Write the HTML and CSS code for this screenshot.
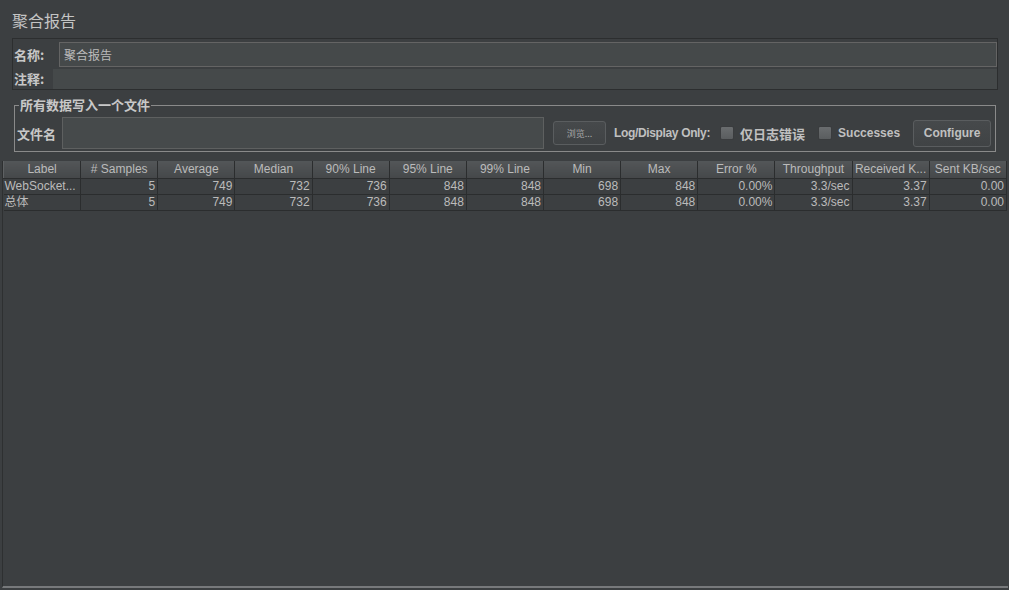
FILE: index.html
```html
<!DOCTYPE html>
<html lang="zh">
<head>
<meta charset="utf-8">
<link rel="stylesheet" href="styles.css">
</head>
<body>
<div class="app">
  <div class="title">聚合报告</div>
  <div class="name-panel">
    <div class="row row-name">
      <span class="lbl">名称:</span>
      <div class="field field-name">聚合报告</div>
    </div>
    <div class="row row-comment">
      <span class="lbl">注释:</span>
      <div class="field field-comment"></div>
    </div>
  </div>
  <fieldset class="file-group">
    <legend>所有数据写入一个文件</legend>
    <div class="file-row">
      <span class="file-lbl">文件名</span>
      <div class="field file-field"></div>
      <div class="btn btn-browse">浏览...</div>
      <span class="log-lbl">Log/Display Only:</span>
      <span class="check"></span>
      <span class="check-lbl cjk">仅日志错误</span>
      <span class="check"></span>
      <span class="check-lbl">Successes</span>
      <div class="btn btn-config">Configure</div>
    </div>
  </fieldset>
  <div class="table-pane">
    <table class="grid">
      <thead>
        <tr>
          <th>Label</th><th># Samples</th><th>Average</th><th>Median</th><th>90% Line</th><th>95% Line</th><th>99% Line</th><th>Min</th><th>Max</th><th>Error %</th><th>Throughput</th><th>Received K...</th><th>Sent KB/sec</th>
        </tr>
      </thead>
      <tbody>
        <tr>
          <td class="first">WebSocket...</td><td>5</td><td>749</td><td>732</td><td>736</td><td>848</td><td>848</td><td>698</td><td>848</td><td>0.00%</td><td>3.3/sec</td><td>3.37</td><td>0.00</td>
        </tr>
        <tr>
          <td class="first">总体</td><td>5</td><td>749</td><td>732</td><td>736</td><td>848</td><td>848</td><td>698</td><td>848</td><td>0.00%</td><td>3.3/sec</td><td>3.37</td><td>0.00</td>
        </tr>
      </tbody>
    </table>
  </div>
</div>
</body>
</html>
```
FILE: styles.css
```css
* { box-sizing: border-box; }
html, body {
  margin: 0;
  padding: 0;
  background: #3c3f41;
  width: 1009px;
  height: 590px;
  overflow: hidden;
}
body {
  font-family: "Liberation Sans", "Noto Sans CJK SC", sans-serif;
  color: #bbbbbb;
  font-size: 12px;
}
.app {
  display: flex;
  flex-direction: column;
  height: 590px;
}
.title {
  font-family: "Noto Sans CJK SC", sans-serif;
  font-size: 16px;
  line-height: 20px;
  padding: 10px 0 0 12px;
  height: 38px;
  color: #c4c4c4;
}
.name-panel {
  margin: 0 11px 0 12px;
  height: 52px;
  border: 1px solid #2c2e2f;
  display: flex;
  flex-direction: column;
}
.row {
  display: flex;
  align-items: center;
}
.row-name {
  height: 29px;
  padding-top: 2px;
}
.row-comment {
  flex: 1;
}
.lbl {
  font-family: "Noto Sans CJK SC", sans-serif;
  font-weight: bold;
  font-size: 13px;
  color: #c8c8c8;
  padding-left: 1px;
}
.row-name .lbl { width: 46px; }
.row-comment .lbl { width: 40px; }
.field {
  background: #45494a;
  flex: 1;
}
.field-name {
  height: 25px;
  border: 1px solid #646464;
  font-family: "Noto Sans CJK SC", sans-serif;
  font-size: 12px;
  line-height: 23px;
  padding-left: 4px;
  color: #bbbbbb;
}
.field-comment {
  height: 20px;
  align-self: flex-end;
}
.file-group {
  margin: 7px 13px 0 14px;
  padding: 0 4px 0 2px;
  border: 1px solid #8a8a8a;
  height: 55px;
  min-width: 0;
}
.file-group legend {
  font-family: "Noto Sans CJK SC", sans-serif;
  font-weight: bold;
  font-size: 13px;
  color: #c8c8c8;
  padding: 0 1px;
  margin-left: 2px;
  line-height: 16px;
}
.file-row {
  display: flex;
  align-items: center;
  height: 38px;
  margin-top: 1px;
}
.file-lbl {
  font-family: "Noto Sans CJK SC", sans-serif;
  font-weight: bold;
  font-size: 13px;
  color: #c8c8c8;
  width: 45px;
  flex: none;
}
.file-field {
  flex: none;
  width: 482px;
  height: 32px;
  border: 1px solid #5e6060;
  background: #464a4b;
}
.btn {
  flex: none;
  border: 1px solid #5a5d5f;
  border-radius: 3px;
  background: linear-gradient(#46494b, #404345);
  color: #bbbbbb;
  display: flex;
  align-items: center;
  justify-content: center;
}
.btn-browse {
  margin-left: 9px;
  width: 53px;
  height: 24px;
  font-family: "Noto Sans CJK SC", sans-serif;
  font-size: 9px;
  color: #a8a8a8;
}
.log-lbl {
  flex: none;
  white-space: nowrap;
  margin-left: 8px;
  font-weight: bold;
  font-size: 12px;
  letter-spacing: -0.35px;
  color: #c0c0c0;
}
.check {
  flex: none;
  width: 14px;
  height: 14px;
  background: linear-gradient(#6a6d6f, #5a5d5f);
  border: 1px solid #3a3c3e;
  border-radius: 2px;
  margin-left: 10px;
}
.check-lbl {
  flex: none;
  white-space: nowrap;
  margin-left: 6px;
  font-weight: bold;
  font-size: 12px;
  color: #c0c0c0;
}
.check-lbl.cjk {
  font-family: "Noto Sans CJK SC", sans-serif;
  font-size: 13px;
  width: 64px;
  margin-right: 4px;
}
.btn-config {
  margin-left: 13px;
  width: 78px;
  height: 27px;
  font-weight: bold;
  font-size: 12px;
  color: #c0c0c0;
}
.table-pane {
  margin: 9px 1px 2px 2px;
  flex: 1;
  border-left: 1px solid #2e3031;
  border-bottom: 2px solid #77797b;
  background: #3c3f41;
}
.grid {
  border-collapse: collapse;
  table-layout: fixed;
  width: 1004px;
  font-size: 12px;
}
.grid th {
  height: 17px;
  font-weight: normal;
  color: #bbbbbb;
  background: linear-gradient(#535658, #45484a);
  border-right: 1px solid #2b2d2e;
  border-left: 1px solid #5e6163;
  border-bottom: 1px solid #2b2d2e;
  padding: 0;
  line-height: 16px;
  white-space: nowrap;
  overflow: hidden;
}
.grid td {
  height: 16px;
  padding: 0 2px 0 1px;
  text-align: right;
  border-right: 1px solid #2b2d2e;
  border-bottom: 1px solid #2b2d2e;
  color: #bbbbbb;
  line-height: 15px;
  white-space: nowrap;
  overflow: hidden;
}
.grid td.first {
  text-align: left;
}
```
